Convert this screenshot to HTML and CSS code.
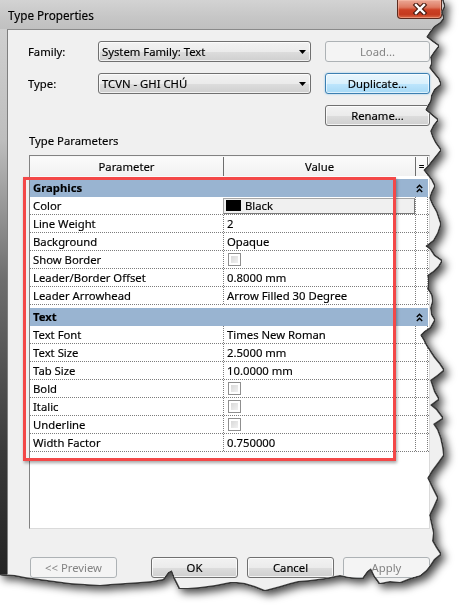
FILE: index.html
```html
<!DOCTYPE html>
<html>
<head>
<meta charset="utf-8">
<title>Type Properties</title>
<link rel="stylesheet" href="styles.css">
</head>
<body>
<div class="stage">
  <div class="window">
    <div class="titlebar">
      <span class="title">Type Properties</span>
      <span class="close">
        <svg width="16" height="12" viewBox="0 0 16 12">
          <path d="M4 2 L12 10 M12 2 L4 10" stroke="#4a1c12" stroke-width="4.6" stroke-linecap="square" fill="none"/>
          <path d="M4 2 L12 10 M12 2 L4 10" stroke="#ffffff" stroke-width="2.4" stroke-linecap="square" fill="none"/>
        </svg>
      </span>
    </div>
    <div class="frame">
      <div class="client">
        <div class="form">
          <span class="lbl">Family:</span>
          <div class="combo"><span>System Family: Text</span><svg class="arrow" width="7" height="4" viewBox="0 0 7 4"><polygon points="0,0 7,0 3.5,4" fill="#000"/></svg></div>
          <button class="btn disabled">Load...</button>
          <span class="lbl">Type:</span>
          <div class="combo"><span>TCVN - GHI CHÚ</span><svg class="arrow" width="7" height="4" viewBox="0 0 7 4"><polygon points="0,0 7,0 3.5,4" fill="#000"/></svg></div>
          <button class="btn focus">Duplicate...</button>
          <span></span>
          <span></span>
          <button class="btn">Rename...</button>
        </div>

        <div class="section-label">Type Parameters</div>

        <div class="grid-wrap">
          <div class="grid">
            <div class="hrow">
              <div class="hc p">Parameter</div>
              <div class="hc v">Value</div>
              <div class="hc x">=</div>
            </div>

            <div class="group">
              <span class="gname">Graphics</span>
              <svg class="chev" width="7" height="9" viewBox="0 0 7 9"><path d="M0.8 4 L3.5 1.2 L6.2 4 M0.8 8 L3.5 5.2 L6.2 8" stroke="#000" stroke-width="1.4" fill="none"/></svg>
            </div>
            <div class="row"><div class="c p">Color</div><div class="c v colorbtn"><span class="swatch"></span>Black</div><div class="c x"></div></div>
            <div class="row"><div class="c p">Line Weight</div><div class="c v">2</div><div class="c x"></div></div>
            <div class="row"><div class="c p">Background</div><div class="c v">Opaque</div><div class="c x"></div></div>
            <div class="row"><div class="c p">Show Border</div><div class="c v"><span class="chk"></span></div><div class="c x"></div></div>
            <div class="row"><div class="c p">Leader/Border Offset</div><div class="c v">0.8000 mm</div><div class="c x"></div></div>
            <div class="row"><div class="c p">Leader Arrowhead</div><div class="c v">Arrow Filled 30 Degree</div><div class="c x"></div></div>

            <div class="group">
              <span class="gname">Text</span>
              <svg class="chev" width="7" height="9" viewBox="0 0 7 9"><path d="M0.8 4 L3.5 1.2 L6.2 4 M0.8 8 L3.5 5.2 L6.2 8" stroke="#000" stroke-width="1.4" fill="none"/></svg>
            </div>
            <div class="row"><div class="c p">Text Font</div><div class="c v">Times New Roman</div><div class="c x"></div></div>
            <div class="row"><div class="c p">Text Size</div><div class="c v">2.5000 mm</div><div class="c x"></div></div>
            <div class="row"><div class="c p">Tab Size</div><div class="c v">10.0000 mm</div><div class="c x"></div></div>
            <div class="row"><div class="c p">Bold</div><div class="c v"><span class="chk"></span></div><div class="c x"></div></div>
            <div class="row"><div class="c p">Italic</div><div class="c v"><span class="chk"></span></div><div class="c x"></div></div>
            <div class="row"><div class="c p">Underline</div><div class="c v"><span class="chk"></span></div><div class="c x"></div></div>
            <div class="row"><div class="c p">Width Factor</div><div class="c v">0.750000</div><div class="c x"></div></div>
          </div>
          <div class="highlight"></div>
        </div>

        <div class="actions">
          <button class="btn sm disabled">&lt;&lt; Preview</button>
          <button class="btn sm ok">OK</button>
          <button class="btn sm">Cancel</button>
          <button class="btn sm disabled">Apply</button>
        </div>
      </div>
    </div>
  </div>
</div>
</body>
</html>
```

FILE: styles.css
```css
* { box-sizing: border-box; margin: 0; padding: 0; }

html, body {
  width: 466px;
  height: 614px;
  background: #ffffff;
  overflow: hidden;
}

body {
  font-family: "Noto Sans", "Open Sans", sans-serif;
  font-size: 11.3px;
  color: #000;
  -webkit-text-stroke: 0.15px #000;
}

.stage {
  width: 466px;
  height: 614px;
  filter: drop-shadow(1px 0 0 #383838) drop-shadow(0 1px 0 #383838) drop-shadow(-1px 0 0 #383838) drop-shadow(0 -1px 0 #383838) drop-shadow(4px 4px 4px rgba(0, 0, 0, 0.72));
}

.window {
  width: 466px;
  height: 614px;
  display: flex;
  flex-direction: column;
  background: #c4c4c4;
  clip-path: polygon(
    0px 0px, 442px 0px, 444px 6px, 441px 12px, 443px 18px, 440px 22px, 434px 26px, 430px 31px, 426px 37px, 431px 41px,
    438px 46px, 434px 51px, 430px 57px, 431px 63px, 429px 68px, 433px 73px, 438px 79px, 440px 84px, 434px 89px, 431px 95px,
    430px 101px, 427px 106px, 425px 110px, 431px 115px, 437px 120px, 433px 125px, 430px 131px, 432px 137px, 435px 143px, 440px 150px,
    436px 155px, 432px 160px, 428px 165px, 423px 170px, 427px 175px, 431px 180px, 434px 186px, 431px 192px, 429px 198px, 432px 205px,
    436px 212px, 440px 224px, 437px 233px, 433px 240px, 425px 246px, 430px 250px, 434px 256px, 441px 261px, 438px 266px, 433px 271px,
    427px 275px, 428px 282px, 427px 289px, 431px 295px, 432px 301px, 430px 308px, 431px 315px, 434px 320px, 430px 327px, 424px 331px,
    420px 335px, 423px 340px, 426px 346px, 430px 352px, 434px 358px, 439px 364px, 443px 370px, 437px 375px, 430px 380px, 432px 386px,
    434px 392px, 438px 399px, 430px 405px, 436px 410px, 442px 418px, 433px 424px, 437px 430px, 440px 438px, 442px 447px, 443px 455px,
    438px 462px, 432px 470px, 427px 478px, 431px 486px, 437px 498px, 433px 507px, 429px 515px, 431px 524px, 433px 533px, 432px 541px,
    436px 548px, 440px 554px, 434px 559px, 430px 565px, 426px 570px,
    420px 575px, 410px 578px, 400px 582px, 390px 581px, 380px 583px, 375px 576px, 371px 568px, 367px 571px, 362px 578px, 350px 577px,
    340px 575px, 325px 578px, 310px 580px, 298px 581px, 290px 583px, 280px 586px, 265px 590px, 255px 586px, 245px 583px, 237px 582px,
    230px 582px, 215px 585px, 200px 587px, 188px 588px, 180px 588px, 175px 578px, 172px 570px, 168px 572px, 163px 579px, 152px 581px,
    140px 582px, 125px 583px, 110px 584px, 100px 585px, 85px 584px, 70px 583px, 55px 581px, 40px 579px, 25px 577px, 15px 575px,
    0px 574px
  );
}

/* ---------- title bar ---------- */
.titlebar {
  height: 29px;
  flex: none;
  display: flex;
  align-items: center;
  padding-left: 8px;
  background: linear-gradient(to bottom, #d3d3d3 0%, #c6c6c6 60%, #c0c0c0 100%);
}

.title {
  font-size: 11.7px;
  color: #000;
  padding-top: 1px;
}

.close {
  align-self: flex-start;
  margin-left: auto;
  margin-right: 24px;
  width: 45px;
  height: 19px;
  display: flex;
  align-items: center;
  justify-content: center;
  border: 1px solid #5b2a1e;
  border-top: none;
  border-radius: 0 0 4px 4px;
  background: linear-gradient(to bottom, #eba896 0%, #de7a62 40%, #cc4024 55%, #c43a1e 80%, #d96a48 100%);
  box-shadow: inset 0 0 0 1px rgba(255, 200, 180, 0.45);
}

/* ---------- frame & client ---------- */
.frame {
  flex: 1;
  display: flex;
  padding-left: 7px;
  background: linear-gradient(to bottom, #cfcfcf 0px, #bebebe 110px, #6e6e6e 250px, #3a3a3a 420px, #1d1d1d 100%);
}

.client {
  flex: 1;
  background: #f0f0f0;
  border-left: 1px solid #7f7f7f;
  border-top: 1px solid #8a8a8a;
  padding: 11px 0 0 20px;
}

/* ---------- top form ---------- */
.form {
  display: grid;
  grid-template-columns: 56px 213px 105px;
  grid-auto-rows: 21px;
  column-gap: 14px;
  row-gap: 11px;
  align-items: center;
}

.lbl {
  padding-bottom: 1px;
}

.combo {
  height: 21px;
  display: flex;
  align-items: center;
  justify-content: space-between;
  padding: 0 4px 1px 3px;
  border: 1px solid #707070;
  border-radius: 3px;
  background: linear-gradient(to bottom, #f2f2f2 0%, #ebebeb 50%, #dddddd 51%, #cfcfcf 100%);
  box-shadow: inset 0 0 0 1px rgba(255, 255, 255, 0.7);
}

.arrow { flex: none; margin-top: 1px; }

.btn {
  height: 21px;
  font: inherit;
  color: #000;
  border: 1px solid #707070;
  border-radius: 3px;
  background: linear-gradient(to bottom, #f2f2f2 0%, #ebebeb 50%, #dddddd 51%, #cfcfcf 100%);
  box-shadow: inset 0 0 0 1px rgba(255, 255, 255, 0.75);
  padding-bottom: 1px;
}

.btn.focus {
  border-color: #3c7fb1;
  background: linear-gradient(to bottom, #eaf6fd 0%, #d9f0fc 50%, #bee6fd 51%, #a7d9f5 100%);
  box-shadow: inset 0 0 0 1px rgba(255, 255, 255, 0.6), 0 0 2px rgba(60, 160, 230, 0.6);
}

.btn.disabled {
  color: #838383;
  -webkit-text-stroke: 0;
  border-color: #adb2b5;
  background: #f4f4f4;
  box-shadow: none;
}

/* ---------- parameters ---------- */
.section-label {
  margin-top: 8px;
  padding-left: 1px;
  line-height: 14px;
  height: 14px;
}

.grid-wrap {
  position: relative;
  margin-top: 7px;
  margin-left: 1px;
  width: 401px;
  height: 374px;
}

.grid {
  height: 100%;
  background: #ffffff;
  border: 1px solid;
  border-color: #828282 #dadada #dadada #828282;
}

.hrow {
  display: flex;
  height: 20px;
  background: linear-gradient(to bottom, #fbfbfb, #f1f1f1);
  border-top: 1px solid #f7f7f7;
}

.hc {
  display: flex;
  align-items: center;
  justify-content: center;
  padding-bottom: 1px;
}

.hc.p { width: 193px; }
.hc.v { width: 192px; border-left: 1px solid #6d6d6d; }
.hc.x { width: 13px; border-left: 1px solid #6d6d6d; border-right: 1px solid #6d6d6d; font-size: 10px; }

.group {
  margin-top: 3px;
  height: 18px;
  width: 398px;
  background: #99b4d1;
  display: flex;
  align-items: center;
  padding-left: 3px;
  padding-bottom: 1px;
}

.gname { font-weight: 700; flex: 1; }
.chev { margin-right: 5px; margin-top: 1px; }

.row {
  display: flex;
  height: 18px;
  border-bottom: 1px dotted #7c7c7c;
}

.c {
  display: flex;
  align-items: center;
  padding-bottom: 1px;
}

.c.p { width: 193px; padding-left: 3px; }
.c.v { width: 192px; padding-left: 3px; border-left: 1px dotted #7c7c7c; }
.c.x { width: 13px; border-left: 1px dotted #7c7c7c; border-right: 1px dotted #7c7c7c; }

.c.v.colorbtn {
  background: #f0f0f0;
  border: 1px solid #a6a6a6;
  border-right-color: #7a7a7a;
  border-bottom-color: #7a7a7a;
  padding-left: 2px;
  margin-top: 1px;
}

.swatch {
  width: 15px;
  height: 11px;
  background: #000;
  margin-right: 4px;
}

.chk {
  width: 13px;
  height: 13px;
  margin-left: 1px;
  margin-top: 1px;
  border: 1px solid #8f8f8f;
  background: #f4f4f4;
  padding: 2px;
  display: block;
  background-image: linear-gradient(135deg, #d2d2d2, #f8f8f8);
  background-clip: content-box;
}

.highlight {
  position: absolute;
  left: -6px;
  top: 22px;
  width: 373px;
  height: 284px;
  border: 3px solid #f34848;
  box-shadow: 1px 2px 3px rgba(0, 0, 0, 0.35);
}

/* ---------- bottom buttons ---------- */
.actions {
  display: flex;
  margin-top: 28px;
  padding-left: 2px;
  gap: 9px;
}

.btn.sm { width: 87px; }
.btn.ok { margin-left: 25px; }
```
